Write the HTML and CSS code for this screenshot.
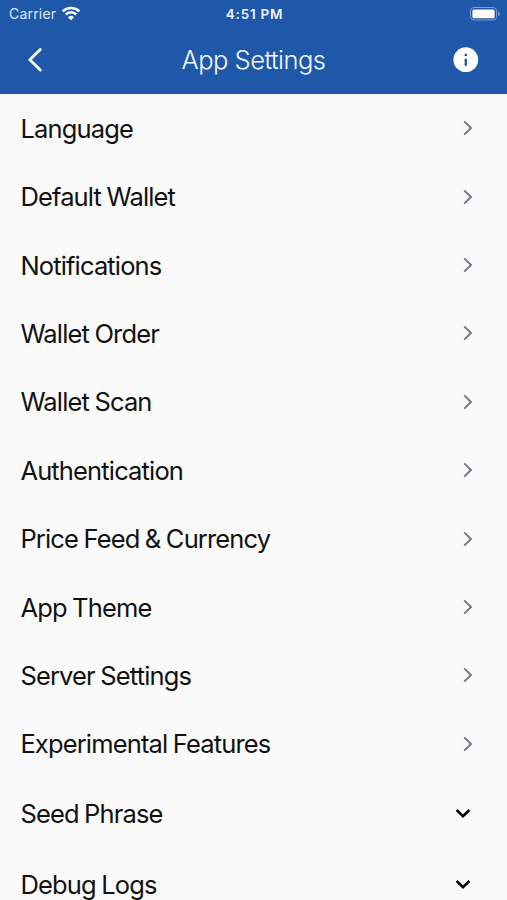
FILE: index.html
```html
<!DOCTYPE html>
<html lang="en">
<head>
<meta charset="utf-8">
<title>App Settings</title>
<link rel="stylesheet" href="styles.css">
</head>
<body>
<svg width="0" height="0" class="defs" aria-hidden="true">
  <symbol id="next" viewBox="0 0 12 18"><path d="M2.2 2.4 9 9l-6.800 6.600" fill="none" stroke="currentColor" stroke-width="1.9"/></symbol>
  <symbol id="down" viewBox="0 0 18 12"><path d="M2.600 3 9 9.200l6.400-6.200" fill="none" stroke="currentColor" stroke-width="2.500"/></symbol>
</svg>
<header class="header">
  <div class="status">
    <div class="carrier"><span>Carrier</span>
      <svg class="wifi" width="20" height="15" viewBox="0 0 20 15" fill="none" stroke="#fff" stroke-width="2.500"><path d="M1.700 5.300a12 12 0 0 1 16.600 0"/><path d="M4.700 8.500a7.600 7.600 0 0 1 10.600 0"/><path d="M10 14.300 7 11.200a4.300 4.300 0 0 1 6 0Z" fill="#fff" stroke="none"/></svg>
    </div>
    <time class="time">4:51 PM</time>
    <svg class="battery" width="32" height="16" viewBox="0 0 32 16"><rect x="1.500" y="1.500" width="26" height="12.500" rx="3.500" fill="none" stroke="#7f9fd0"/><rect x="3.400" y="3.400" width="22.200" height="8.800" rx="1.500" fill="#fff"/><path d="M29 5.500q2 .7 2 2.300t-2 2.300Z" fill="#7f9fd0"/></svg>
  </div>
  <div class="nav">
    <svg width="20" height="28" viewBox="0 0 20 28"><path d="M16.300 3.400 5.800 13.700l10.500 10.300" fill="none" stroke="#fff" stroke-width="2.800" stroke-linecap="round" stroke-linejoin="round"/></svg>
    <h1 class="title">App Settings</h1>
    <svg width="26" height="26" viewBox="0 0 26 26"><circle cx="12.800" cy="12.700" r="12.400" fill="#fff"/><path d="M11.600 6.700h2.400v2.400h-2.400zM11.600 11.700h2.400v7h-2.400z" fill="#2058a9"/></svg>
  </div>
</header>
<main class="list">
  <div class="row"><span>Language</span><svg class="next"><use href="#next"/></svg></div>
  <div class="row"><span>Default Wallet</span><svg class="next"><use href="#next"/></svg></div>
  <div class="row"><span>Notifications</span><svg class="next"><use href="#next"/></svg></div>
  <div class="row"><span>Wallet Order</span><svg class="next"><use href="#next"/></svg></div>
  <div class="row"><span>Wallet Scan</span><svg class="next"><use href="#next"/></svg></div>
  <div class="row"><span>Authentication</span><svg class="next"><use href="#next"/></svg></div>
  <div class="row"><span>Price Feed &amp; Currency</span><svg class="next"><use href="#next"/></svg></div>
  <div class="row"><span>App Theme</span><svg class="next"><use href="#next"/></svg></div>
  <div class="row"><span>Server Settings</span><svg class="next"><use href="#next"/></svg></div>
  <div class="row"><span>Experimental Features</span><svg class="next"><use href="#next"/></svg></div>
  <div class="row expandable"><span>Seed Phrase</span><svg class="down"><use href="#down"/></svg></div>
  <div class="row expandable"><span>Debug Logs</span><svg class="down"><use href="#down"/></svg></div>
</main>
</body>
</html>
```
FILE: styles.css
```css
* { box-sizing: border-box; }
html, body { height: 100%; }
body {
  margin: 0;
  overflow: hidden;
  background: #fafafa;
  color: #111;
  font-family: Inter, "Liberation Sans", sans-serif;
}
svg { display: block; flex: none; }
.defs { position: absolute; }
.header { height: 94px; background: #2058a9; color: #fff; }
.status {
  height: 27px;
  padding: 0 6px 0 9px;
  display: grid;
  grid-template-columns: 1fr auto 1fr;
  align-items: center;
  font-size: 14px;
}
.carrier { display: flex; align-items: center; gap: 5px; color: #dce8fa; letter-spacing: 0.2px; }
.wifi { margin-top: -1px; }
.time { margin-right: 1px; font-size: 13.5px; font-weight: 600; letter-spacing: 0.75px; color: #eef4fd; }
.battery { justify-self: end; }
.nav {
  height: 66px;
  padding: 0 28px 0 24px;
  display: flex;
  align-items: center;
  justify-content: space-between;
}
.title {
  margin: 0 0 0 10px;
  font-size: 25.5px;
  font-weight: 350;
  letter-spacing: -0.5px;
  line-height: 32px;
  color: #f4f8ff;
}
.row {
  height: 68.4px;
  padding: 0 33px 0 20.4px;
  display: flex;
  align-items: center;
  justify-content: space-between;
  font-size: 25.5px;
  line-height: 32px;
  letter-spacing: -0.85px;
  word-spacing: -0.9px;
  white-space: nowrap;
}
.row span { padding-top: 1.4px; }
.next { width: 12px; height: 18px; color: #707780; }
.expandable { height: 70.8px; padding-right: 35px; }
.down { width: 18px; height: 12px; color: #000; }
```
